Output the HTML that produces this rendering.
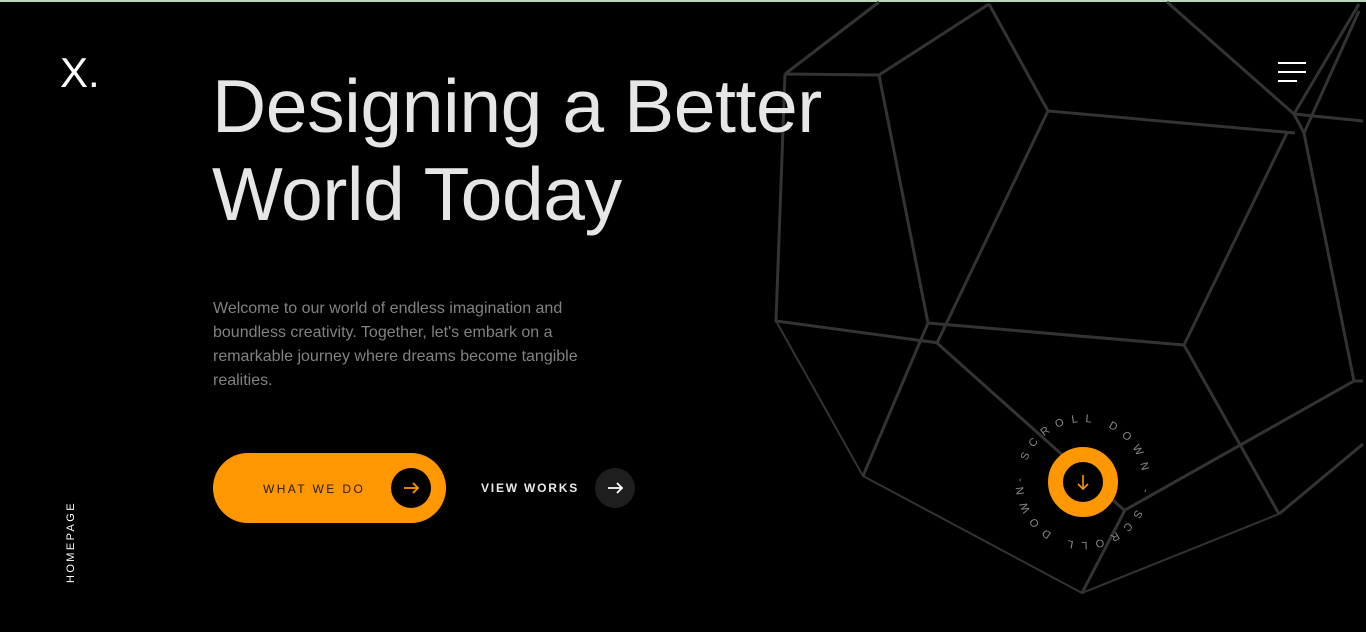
<!DOCTYPE html>
<html><head><meta charset="utf-8"><style>
*{margin:0;padding:0;box-sizing:border-box}
body{width:1366px;height:632px;background:#000;overflow:hidden;position:relative;font-family:"Liberation Sans",Arial,sans-serif}
.top{position:absolute;left:0;top:0;width:1366px;height:2px;background:#b9d6b9}
svg.geo{position:absolute;left:0;top:0}
.logo{position:absolute;left:60px;top:48px;color:#fff;font-size:42px;line-height:50px;font-weight:300}
.burger{position:absolute;left:1278px;top:62px}
.burger i{display:block;height:2px;background:#fff;margin-bottom:7px;width:28px}
.burger i:last-child{width:19px}
h1{position:absolute;left:212px;top:62px;color:#e6e6e6;font-weight:400;font-size:75px;line-height:88px;letter-spacing:-0.4px}
p{position:absolute;left:213px;top:297px;width:380px;color:#828282;font-size:16px;line-height:24px}
.btn{position:absolute;left:213px;top:453px;width:233px;height:70px;border-radius:35px;background:#ff9800}
.btn span{position:absolute;left:50px;top:29px;font-size:12px;letter-spacing:2.4px;color:#2a1a00}
.btn b{position:absolute;left:178px;top:15px;width:40px;height:40px;border-radius:50%;background:#000}
.vw{position:absolute;left:481px;top:481px;color:#e8e8e8;font-size:12px;font-weight:700;letter-spacing:1.8px}
.vc{position:absolute;left:595px;top:468px;width:40px;height:40px;border-radius:50%;background:#1e1e1e}
.home{position:absolute;left:65px;top:583px;transform:rotate(-90deg);transform-origin:0 0;color:#fff;font-size:11px;letter-spacing:2.4px}
</style></head><body>
<div class="top"></div>
<svg class="geo" width="1366" height="632" viewBox="0 0 1366 632" fill="none" stroke="#333" stroke-width="3">
<path d="M785 74 L879 2 M785 74 L879 75 L989 4 M989 4 L1048 111 L1295 133 M1048 111 L937 343 M1167 2 L1294 114 L1363 121 M1359 4 L1294 114 M1359 11 L1304 133 L1354 381 L1363 381 M1294 114 L1304 133 M1287 133 L1184 345 M879 75 L928 323 M785 74 L776 321 L939 343 M928 323 L1184 345 M928 323 L863 476 M937 343 L1124 510 M1082 593 L1125 510 M1184 345 L1279 514 M1125 510 L1354 381 M1279 514 L1363 444"/>
<path d="M776 321 L863 476 L1082 593 L1279 514" stroke-width="2"/>
<g transform="translate(1083,482)">
<circle r="27.5" stroke="#ff9800" stroke-width="15" fill="#000"/>
<path d="M0 -7 V7 M-5 2 L0 7 L5 2" stroke="#ff9800" stroke-width="1.6"/>
<defs><path id="c" d="M-60 0 A60 60 0 1 1 60 0 A60 60 0 1 1 -60 0"/></defs>
<text fill="#8a8a8a" stroke="none" font-family="Liberation Sans,sans-serif" font-size="11" textLength="372" lengthAdjust="spacing"><textPath href="#c" textLength="372" lengthAdjust="spacing">- SCROLL DOWN - SCROLL DOWN</textPath></text>
</g>
</svg>
<div class="logo">X.</div>
<div class="burger"><i></i><i></i><i></i></div>
<h1>Designing a Better<br>World Today</h1>
<p>Welcome to our world of endless imagination and boundless creativity. Together, let's embark on a remarkable journey where dreams become tangible realities.</p>
<div class="btn"><span>WHAT WE DO</span><b><svg width="40" height="40"><path d="M13 20 H27 M22 15 L27 20 L22 25" stroke="#ff9800" stroke-width="1.8" fill="none"/></svg></b></div>
<div class="vw">VIEW WORKS</div>
<div class="vc"><svg width="40" height="40"><path d="M13 20 H27 M22 15 L27 20 L22 25" stroke="#fff" stroke-width="1.8" fill="none"/></svg></div>
<div class="home">HOMEPAGE</div>
</body></html>
